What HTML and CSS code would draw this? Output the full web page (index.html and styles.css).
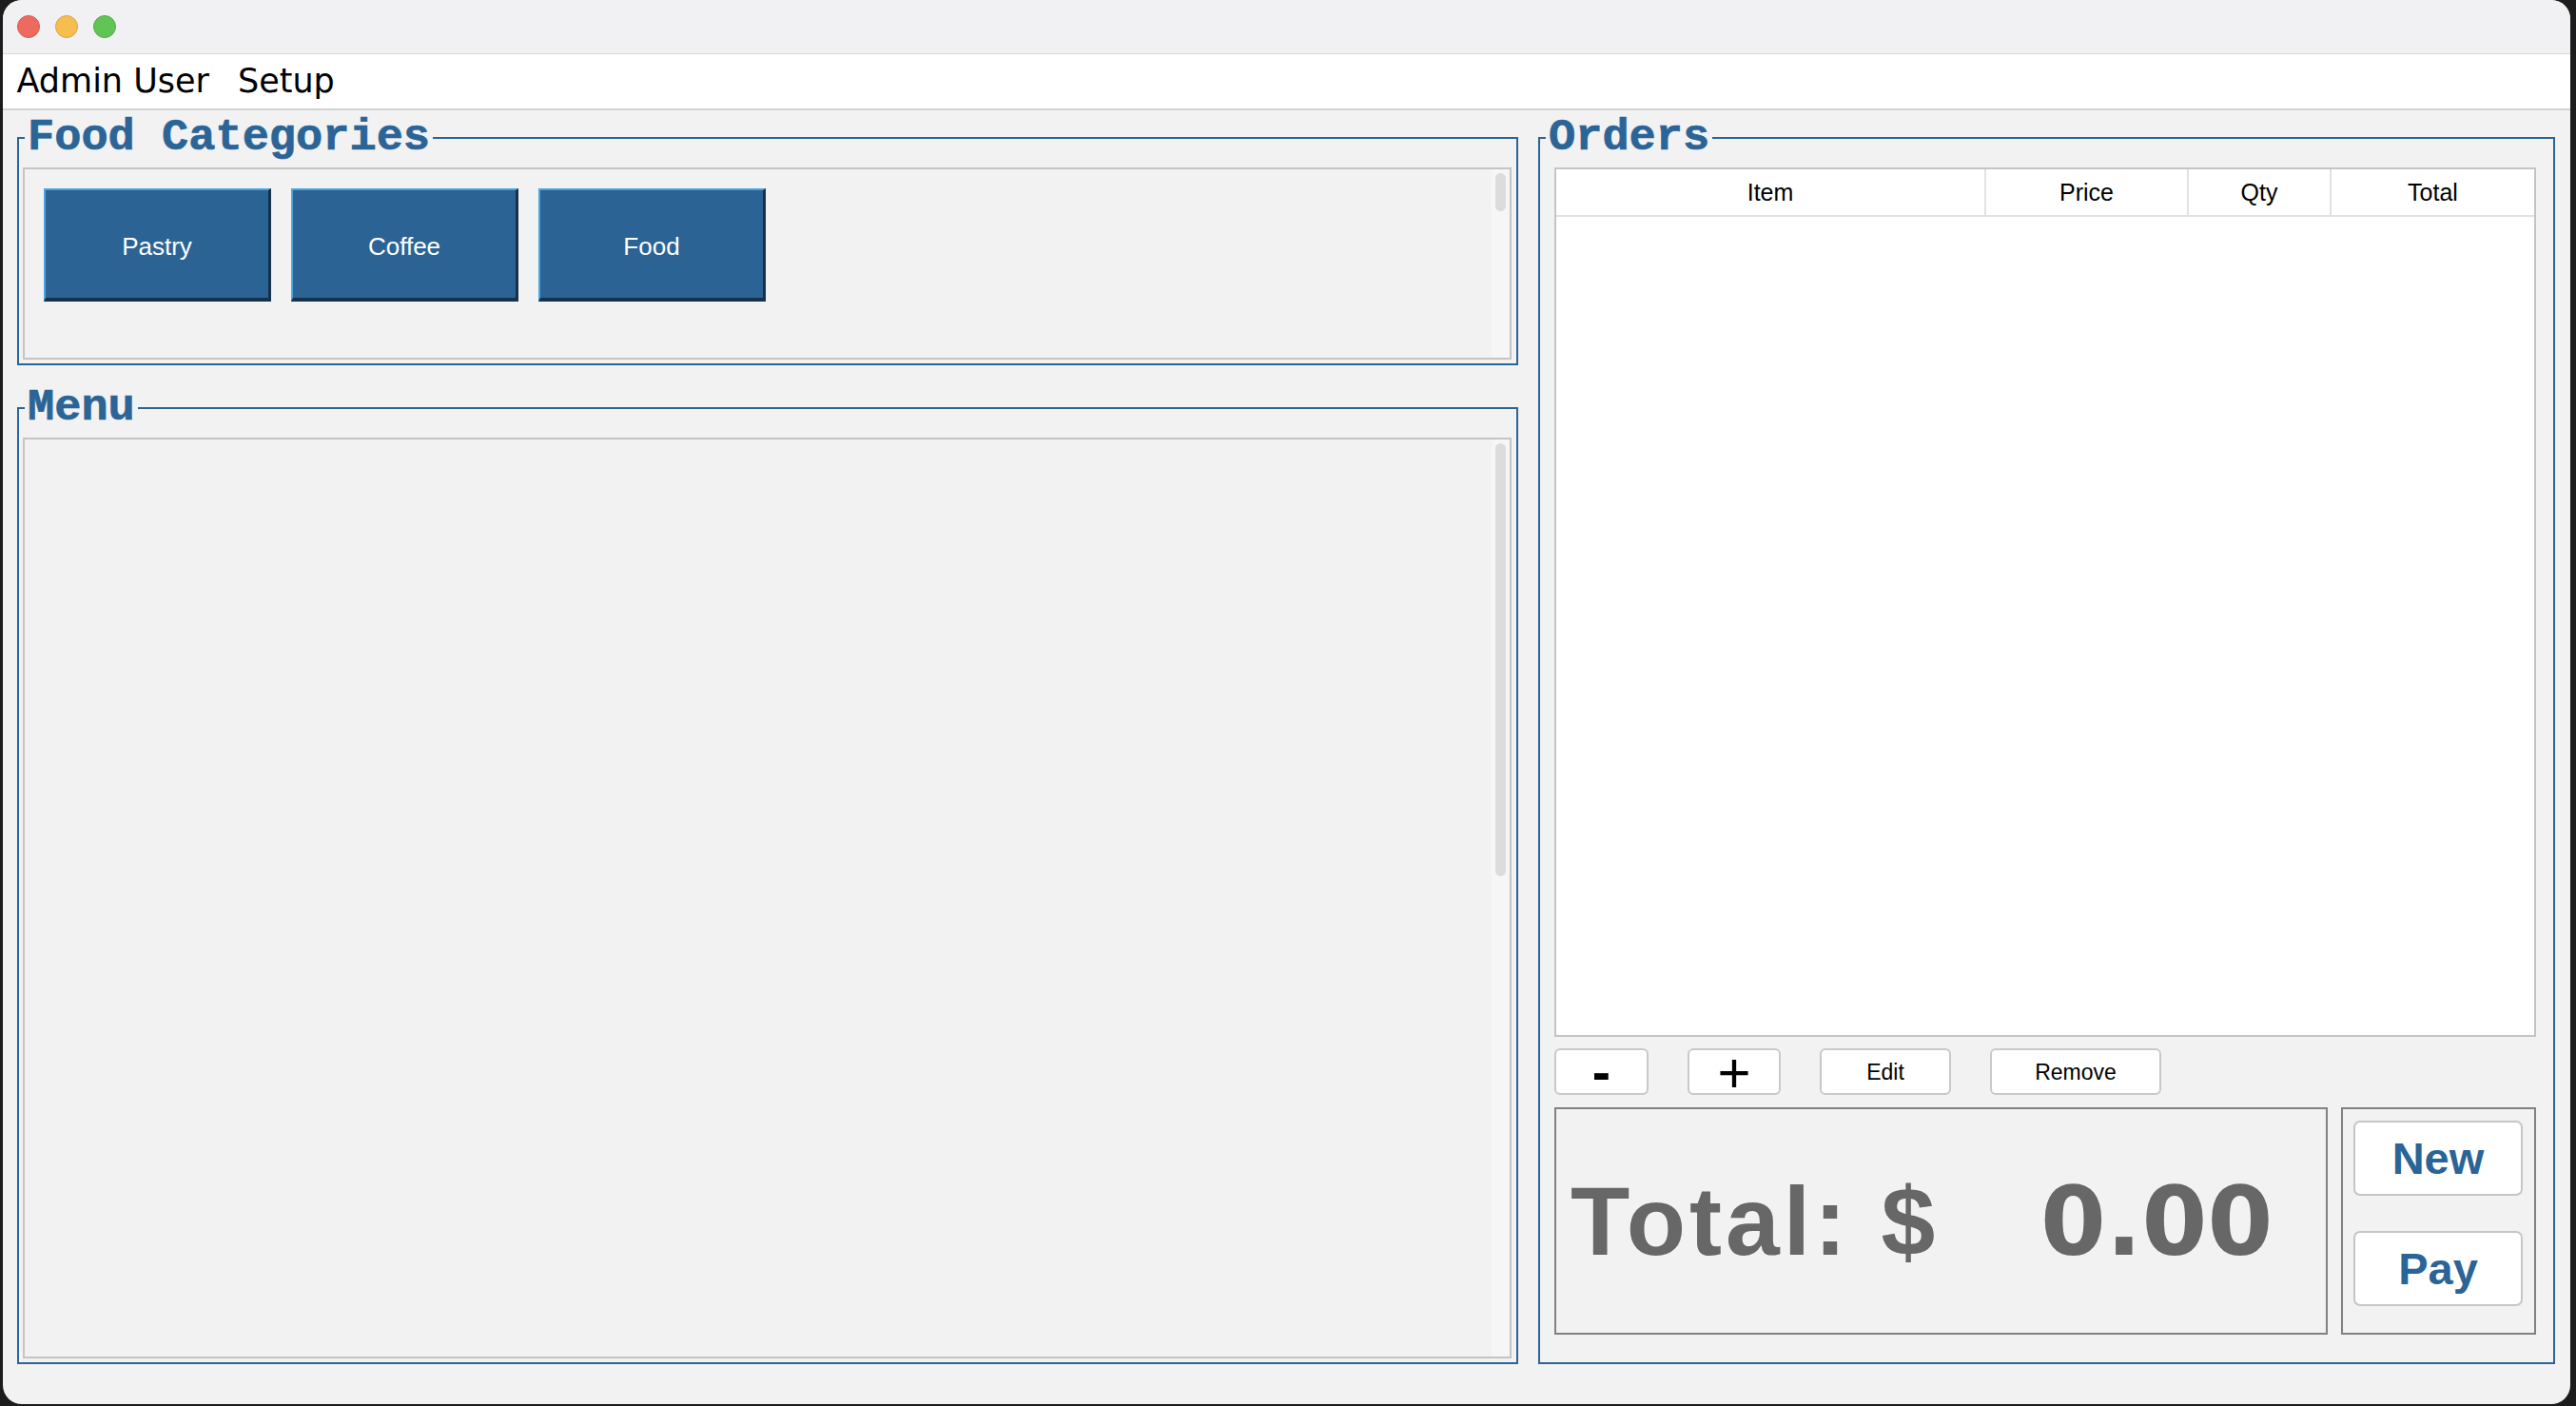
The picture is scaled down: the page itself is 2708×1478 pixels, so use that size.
FILE: index.html
```html
<!DOCTYPE html>
<html lang="en">
<head>
<meta charset="utf-8">
<title>POS</title>
<link rel="stylesheet" href="styles.css">
</head>
<body>
<div class="window">
  <div class="titlebar">
    <span class="light red"></span>
    <span class="light yellow"></span>
    <span class="light green"></span>
  </div>
  <div class="menubar">
    <span class="menu-item">Admin User</span>
    <span class="menu-item">Setup</span>
  </div>
  <div class="content">
    <div class="left-col">
      <fieldset class="group categories">
        <legend>Food Categories</legend>
        <div class="group-body">
          <div class="panel cat-panel">
            <div class="cat-buttons">
              <button class="cat-btn">Pastry</button>
              <button class="cat-btn">Coffee</button>
              <button class="cat-btn">Food</button>
            </div>
            <div class="scroll-track"><div class="scroll-thumb thumb-cat"></div></div>
          </div>
        </div>
      </fieldset>
      <fieldset class="group menu">
        <legend>Menu</legend>
        <div class="group-body">
          <div class="panel menu-panel">
            <div class="menu-items"></div>
            <div class="scroll-track"><div class="scroll-thumb thumb-menu"></div></div>
          </div>
        </div>
      </fieldset>
    </div>
    <fieldset class="group orders">
      <legend>Orders</legend>
      <div class="group-body orders-body">
        <div class="order-table">
          <div class="order-head">
            <div class="th">Item</div>
            <div class="th">Price</div>
            <div class="th">Qty</div>
            <div class="th">Total</div>
          </div>
          <div class="order-rows"></div>
        </div>
        <div class="order-actions">
          <button class="act-btn btn-minus">-</button>
          <button class="act-btn btn-plus">+</button>
          <button class="act-btn btn-edit">Edit</button>
          <button class="act-btn btn-remove">Remove</button>
        </div>
        <div class="order-bottom">
          <div class="total-box">
            <div class="total-line"><span class="total-label">Total: $</span><span class="total-value">0.00</span></div>
          </div>
          <div class="side-box">
            <button class="side-btn">New</button>
            <button class="side-btn">Pay</button>
          </div>
        </div>
      </div>
    </fieldset>
  </div>
</div>
</body>
</html>
```

FILE: styles.css
```css
* { box-sizing: border-box; }
html, body { margin: 0; padding: 0; }
body {
  background: #1c1c1c;
  width: 2708px;
  height: 1478px;
  overflow: hidden;
  font-family: "Liberation Sans", Arial, sans-serif;
}
.window {
  margin-left: 3px;
  width: 2699px;
  height: 1476px;
  background: #f2f2f2;
  border-radius: 20px;
  overflow: hidden;
  display: flex;
  flex-direction: column;
}
.titlebar {
  height: 57px;
  flex: none;
  background: #f1f1f3;
  border-bottom: 1px solid #d9d9d9;
  display: flex;
  align-items: center;
  gap: 16px;
  padding-left: 15px;
}
.light { width: 24px; height: 24px; border-radius: 50%; display: block; }
.red { background: #ee6a5f; border: 1px solid #d65a4f; }
.yellow { background: #f5be4f; border: 1px solid #dca23e; }
.green { background: #61c555; border: 1px solid #4fac43; }
.menubar {
  height: 59px;
  flex: none;
  background: #ffffff;
  border-bottom: 2px solid #d2d2d2;
  display: flex;
  gap: 30px;
  padding-left: 14.5px;
  font-family: "DejaVu Sans", sans-serif;
  font-size: 35px;
  line-height: 57px;
  color: #000;
}
.content {
  flex: 1;
  display: grid;
  grid-template-columns: 1578px 1069px;
  column-gap: 21px;
  padding: 3px 16px 42px 15px;
  min-height: 0;
}
.left-col {
  display: flex;
  flex-direction: column;
  gap: 19px;
  min-height: 0;
}
.group {
  margin: 0;
  padding: 0;
  border: 2px solid #2b6496;
  min-width: 0;
  display: flex;
  flex-direction: column;
}
.group legend {
  margin-left: 6px;
  padding: 0 3px;
  font-family: "Liberation Mono", "Courier New", monospace;
  font-weight: bold;
  font-size: 47px;
  line-height: 52px;
  color: #2b6496;
  -webkit-text-stroke: 0.7px #2b6496;
}
.categories { height: 265px; flex: none; }
.menu { flex: 1; }
.group-body {
  flex: 1;
  display: flex;
  flex-direction: column;
  padding: 5px 5px 4px 4px;
  min-height: 0;
}
.panel {
  display: flex;
  border: 2px solid #c4c4c4;
  background: #f2f2f2;
  min-height: 0;
}
.cat-panel { height: 202px; flex: none; }
.menu-panel { height: 968px; flex: none; }
.cat-buttons {
  flex: 1;
  display: flex;
  align-items: flex-start;
  gap: 21px;
  padding: 20px;
}
.menu-items { flex: 1; }
.cat-btn {
  width: 239px;
  height: 119px;
  margin: 0;
  padding: 5px 0 0 0;
  background: #2b6494;
  border-style: solid;
  border-width: 2px 3px 4px 2px;
  border-color: #4aa6e2 #16314a #16314a #4aa6e2;
  color: #ffffff;
  font-family: "Liberation Sans", Arial, sans-serif;
  font-size: 26px;
}
.scroll-track {
  width: 19px;
  flex: none;
  background: #f6f6f6;
  padding: 4px 0 0 4px;
}
.scroll-thumb {
  width: 11px;
  border-radius: 6px;
  background: #dcdcdc;
}
.thumb-cat { height: 40px; }
.thumb-menu { height: 455px; }

.orders-body { padding: 5px 18px 29px 15px; }
.order-table {
  flex: 1;
  display: flex;
  flex-direction: column;
  border: 2px solid #c4c4c4;
  background: #ffffff;
  min-height: 0;
}
.order-head {
  display: grid;
  grid-template-columns: 450px 213px 150px 1fr;
  height: 50px;
  border-bottom: 2px solid #e2e2e2;
}
.th {
  text-align: center;
  font-size: 25px;
  line-height: 48px;
  color: #000;
}
.th + .th { border-left: 2px solid #e2e2e2; }
.order-rows { flex: 1; }

.order-actions {
  margin-top: 12px;
  height: 49px;
  flex: none;
  display: flex;
  gap: 41px;
}
.act-btn {
  margin: 0;
  padding: 2px 0 0 0;
  height: 49px;
  background: #ffffff;
  border: 2px solid #c9c9c9;
  border-radius: 6px;
  color: #000;
  font-family: "Liberation Sans", Arial, sans-serif;
  font-size: 23px;
  line-height: 43px;
}
.btn-minus { width: 99px; font-size: 58px; font-weight: bold; padding-top: 0; }
.btn-plus { width: 98px; font-size: 60px; padding-top: 2px; }
.btn-edit { width: 138px; }
.btn-remove { width: 180px; }

.order-bottom {
  margin-top: 13px;
  height: 239px;
  flex: none;
  display: flex;
  gap: 14px;
}
.total-box {
  flex: 1;
  border: 2px solid #818181;
  display: flex;
  align-items: center;
  padding-left: 15px;
}
.total-line {
  line-height: 1;
  color: #676767;
  white-space: nowrap;
}
.total-label {
  font-family: "Liberation Sans", Arial, sans-serif;
  font-weight: bold;
  font-size: 102px;
  letter-spacing: 4px;
}
.total-value {
  font-family: "DejaVu Sans", sans-serif;
  font-weight: bold;
  font-size: 99px;
  margin-left: 107px;
}
.side-box {
  width: 205px;
  flex: none;
  border: 2px solid #818181;
  display: flex;
  flex-direction: column;
  gap: 37px;
  padding: 12px 12px 0 11px;
}
.side-btn {
  margin: 0;
  padding: 0;
  height: 79px;
  background: #ffffff;
  border: 2px solid #c6c6c6;
  border-radius: 7px;
  color: #2b6496;
  font-family: "Liberation Sans", Arial, sans-serif;
  font-weight: bold;
  font-size: 47px;
}
```
